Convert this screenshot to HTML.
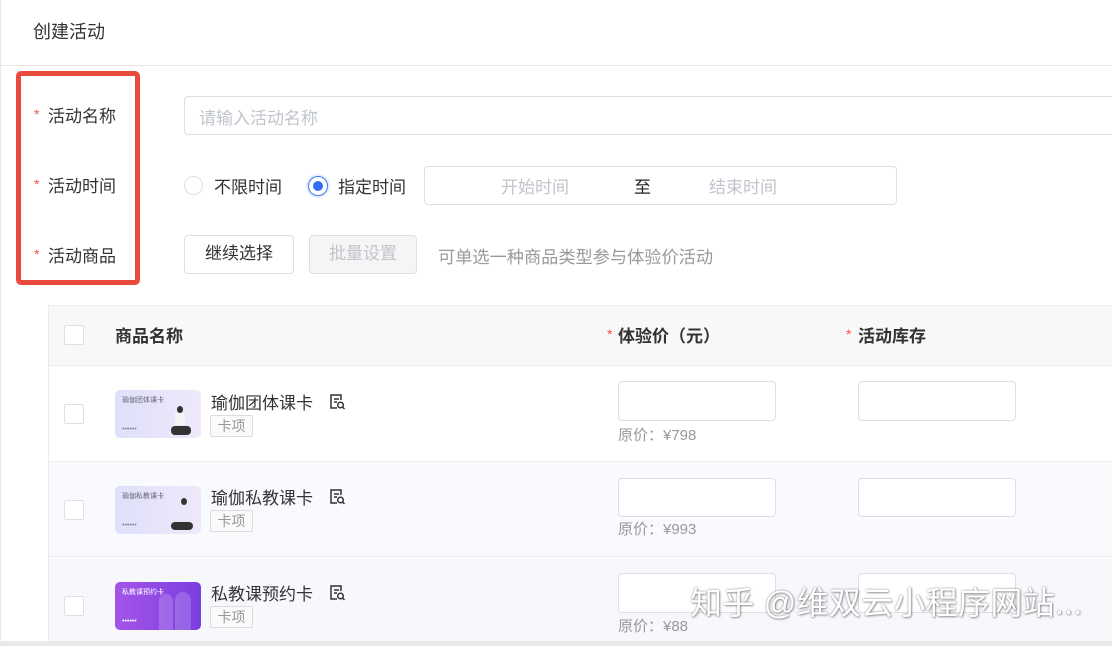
<!DOCTYPE html>
<html><head><meta charset="utf-8"><style>
*{margin:0;padding:0;box-sizing:border-box}
body{width:1112px;height:646px;overflow:hidden;background:#fff;font-family:"Liberation Sans","Noto Sans CJK SC",sans-serif;color:#333;position:relative}
.a{position:absolute;white-space:nowrap}
.lbl{font-size:17px;color:#333}
.st{position:absolute;color:#f0504a;font-size:14px}
.inp{position:absolute;border:1px solid #dcdfe6;border-radius:4px;background:#fff}
.cb{position:absolute;width:20px;height:20px;border:1px solid #dcdfe6;border-radius:2px;background:#fff}
.thumb{position:absolute;left:115px;width:86px;height:48px;border-radius:5px;overflow:hidden}
.name{font-size:17px;color:#333}
.tag{position:absolute;left:210px;width:43px;height:22px;border:1px solid #dcdcdc;background:#fafafa;color:#999;font-size:14px;text-align:center;line-height:20px;border-radius:2px}
.price{font-size:15px;color:#999}
</style></head><body>
<div class="a" style="left:0;top:0;width:1px;height:646px;background:#e8e8e8"></div>
<div class="a" style="left:33px;top:18px;font-size:18px;color:#333">创建活动</div>
<div class="a" style="left:1px;top:65px;width:1111px;height:1px;background:#e6e6e6"></div>

<div class="a" style="left:16px;top:71px;width:124px;height:214px;border:5px solid #ea4a3e;border-radius:5px"></div>
<div class="st" style="left:34px;top:106px">*</div><div class="a lbl" style="left:48px;top:102px">活动名称</div>
<div class="st" style="left:34px;top:176px">*</div><div class="a lbl" style="left:48px;top:172px">活动时间</div>
<div class="st" style="left:34px;top:246px">*</div><div class="a lbl" style="left:48px;top:242px">活动商品</div>

<div class="inp" style="left:184px;top:96px;width:940px;height:39px"></div>
<div class="a" style="left:199px;top:104px;font-size:17px;color:#c0c4cc">请输入活动名称</div>

<div class="a" style="left:184px;top:176px;width:19px;height:19px;border:1px solid #dcdfe6;border-radius:50%"></div>
<div class="a" style="left:214px;top:173px;font-size:17px;color:#333">不限时间</div>
<div class="a" style="left:308px;top:176px;width:20px;height:20px;border:1px solid #3d7bf7;border-radius:50%;box-shadow:0 0 0 2px #e3ecff"><div style="position:absolute;left:4px;top:4px;width:10px;height:10px;border-radius:50%;background:#2f6ff3"></div></div>
<div class="a" style="left:338px;top:173px;font-size:17px;color:#333">指定时间</div>
<div class="inp" style="left:424px;top:166px;width:473px;height:39px"></div>
<div class="a" style="left:501px;top:173px;font-size:17px;color:#c0c4cc">开始时间</div>
<div class="a" style="left:634px;top:173px;font-size:17px;color:#222">至</div>
<div class="a" style="left:709px;top:173px;font-size:17px;color:#c0c4cc">结束时间</div>

<div class="inp" style="left:184px;top:235px;width:110px;height:39px;text-align:center;line-height:36px;font-size:17px;color:#333">继续选择</div>
<div class="inp" style="left:309px;top:235px;width:108px;height:39px;background:#f5f5f5;text-align:center;line-height:36px;font-size:17px;color:#c0c4cc">批量设置</div>
<div class="a" style="left:438px;top:243px;font-size:17.2px;color:#999">可单选一种商品类型参与体验价活动</div>

<!-- table -->
<div class="a" style="left:48px;top:305px;width:1064px;height:336px;border-left:1px solid #ebebeb;border-top:1px solid #ebebeb"></div>
<div class="a" style="left:49px;top:306px;width:1063px;height:60px;background:#f8f8f8;border-bottom:1px solid #ebebeb"></div>
<div class="a" style="left:49px;top:366px;width:1063px;height:96px;background:#fff;border-bottom:1px solid #ebebeb"></div>
<div class="a" style="left:49px;top:462px;width:1063px;height:95px;background:#f8fafd;border-bottom:1px solid #ebebeb"></div>
<div class="a" style="left:49px;top:558px;width:1063px;height:83px;background:#f6f8fc"></div>
<div class="a" style="left:0;top:641px;width:1112px;height:5px;background:#e9e9e9"></div>

<div class="cb" style="left:64px;top:325px"></div>
<div class="a" style="left:115px;top:322px;font-size:17px;font-weight:bold;color:#333">商品名称</div>
<div class="st" style="left:607px;top:326px">*</div><div class="a" style="left:618px;top:322px;font-size:17px;font-weight:bold;color:#333">体验价（元）</div>
<div class="st" style="left:846px;top:326px">*</div><div class="a" style="left:858px;top:322px;font-size:17px;font-weight:bold;color:#333">活动库存</div>

<!-- row1 -->
<div class="cb" style="left:64px;top:404px"></div>
<div class="thumb" style="top:390px;background:linear-gradient(90deg,#dfe0fb,#efe8fa)"><span class="a" style="left:7px;top:5px;font-size:7px;color:#667">瑜伽团体课卡</span><span class="a" style="left:7px;top:36px;font-size:7px;color:#889">••••••</span><div class="a" style="left:62px;top:16px;width:6px;height:7px;border-radius:50%;background:#333"></div><div class="a" style="left:60px;top:23px;width:10px;height:12px;background:#f4f4f4"></div><div class="a" style="left:56px;top:36px;width:20px;height:9px;border-radius:4px;background:#333"></div></div>
<div class="a name" style="left:211px;top:389px">瑜伽团体课卡</div>
<div class="tag" style="top:415px">卡项</div>
<div class="inp" style="left:618px;top:381px;width:158px;height:40px"></div>
<div class="inp" style="left:858px;top:381px;width:158px;height:40px"></div>
<div class="a price" style="left:618px;top:424px">原价：¥798</div>

<!-- row2 -->
<div class="cb" style="left:64px;top:500px"></div>
<div class="thumb" style="top:486px;background:linear-gradient(90deg,#dfe0fb,#efe8fa)"><span class="a" style="left:7px;top:5px;font-size:7px;color:#667">瑜伽私教课卡</span><span class="a" style="left:7px;top:36px;font-size:7px;color:#889">••••••</span><div class="a" style="left:66px;top:12px;width:6px;height:7px;border-radius:50%;background:#333"></div><div class="a" style="left:56px;top:36px;width:22px;height:8px;border-radius:4px;background:#333"></div></div>
<div class="a name" style="left:211px;top:484px">瑜伽私教课卡</div>
<div class="tag" style="top:510px">卡项</div>
<div class="inp" style="left:618px;top:478px;width:158px;height:39px"></div>
<div class="inp" style="left:858px;top:478px;width:158px;height:39px"></div>
<div class="a price" style="left:618px;top:518px">原价：¥993</div>

<!-- row3 -->
<div class="cb" style="left:64px;top:596px"></div>
<div class="thumb" style="top:582px;background:linear-gradient(90deg,#a455e8,#7b3ee0)"><span class="a" style="left:7px;top:5px;font-size:7px;color:#fff">私教课预约卡</span><span class="a" style="left:7px;top:36px;font-size:7px;color:#fff">••••••</span><div class="a" style="left:44px;top:12px;width:14px;height:36px;background:rgba(255,255,255,.18);border-radius:7px 7px 0 0"></div><div class="a" style="left:60px;top:10px;width:16px;height:38px;background:rgba(255,255,255,.18);border-radius:8px 8px 0 0"></div></div>
<div class="a name" style="left:211px;top:580px">私教课预约卡</div>
<div class="tag" style="top:606px">卡项</div>
<div class="inp" style="left:618px;top:573px;width:158px;height:40px"></div>
<div class="inp" style="left:858px;top:573px;width:158px;height:40px"></div>
<div class="a price" style="left:618px;top:615px">原价：¥88</div>

<!-- icons -->
<svg class="a" style="left:329px;top:393px" width="17" height="18" viewBox="0 0 17 18"><g fill="none" stroke="#333" stroke-width="1.5"><path d="M8 15H2V2h10v5"/><path d="M5 6h5M5 9h3"/><circle cx="11.5" cy="12" r="2.8"/><path d="M13.5 14l2 2"/></g></svg>
<svg class="a" style="left:329px;top:488px" width="17" height="18" viewBox="0 0 17 18"><g fill="none" stroke="#333" stroke-width="1.5"><path d="M8 15H2V2h10v5"/><path d="M5 6h5M5 9h3"/><circle cx="11.5" cy="12" r="2.8"/><path d="M13.5 14l2 2"/></g></svg>
<svg class="a" style="left:329px;top:584px" width="17" height="18" viewBox="0 0 17 18"><g fill="none" stroke="#333" stroke-width="1.5"><path d="M8 15H2V2h10v5"/><path d="M5 6h5M5 9h3"/><circle cx="11.5" cy="12" r="2.8"/><path d="M13.5 14l2 2"/></g></svg>

<div class="a" style="left:690px;top:578px;font-size:32px;letter-spacing:0.3px;color:#fff;text-shadow:0 0 2px rgba(0,0,0,.45),1px 1px 2px rgba(0,0,0,.3)">知乎 @维双云小程序网站...</div>
</body></html>
